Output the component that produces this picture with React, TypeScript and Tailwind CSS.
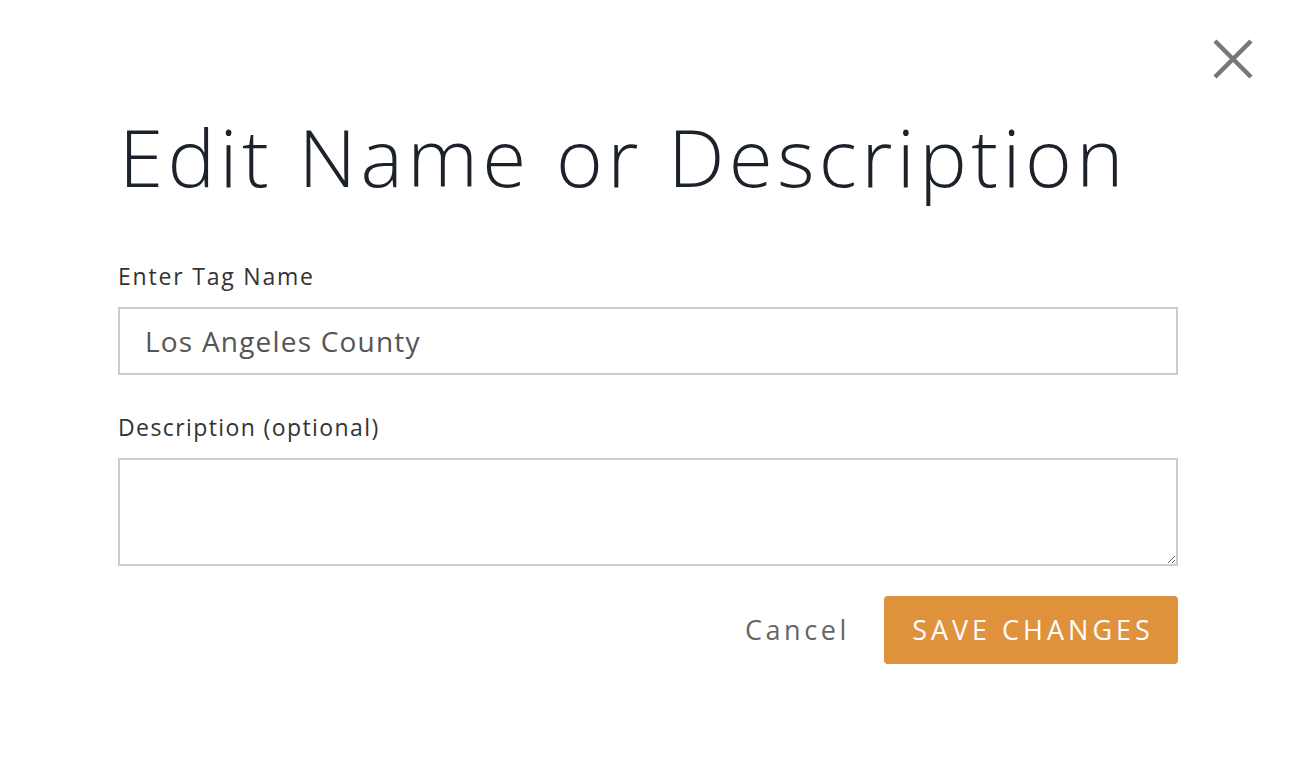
import React from "react";

export default function App() {
  return (
    <div className="w-[1290px] h-[774px] bg-white relative" style={{ fontFamily: '"Open Sans", "Noto Sans", sans-serif' }}>
      <button className="absolute left-[1211px] top-[38px] w-[44px] h-[42px] flex items-center justify-center">
        <svg width="44" height="42" viewBox="0 0 44 42">
          <path d="M4 3 L40 39 M40 3 L4 39" stroke="#777777" strokeWidth="4.5" strokeLinecap="butt" />
        </svg>
      </button>
      <div className="pl-[118px] pr-[112px] pt-[106px]">
        <h1 className="text-[80px] leading-[100px] font-light text-[#1c222a] tracking-[4.4px] ml-[1px] whitespace-nowrap">Edit Name or Description</h1>
        <div className="mt-[56px] text-[23px] leading-[28px] text-[#333333] tracking-[1.8px]">Enter Tag Name</div>
        <div className="mt-[17px] h-[68px] border-2 border-[#cccccc] flex items-center pl-[25px] text-[28px] text-[#555555] tracking-[1.2px]">
          Los Angeles County
        </div>
        <div className="mt-[38px] text-[23px] leading-[28px] text-[#333333] tracking-[1.4px]">Description (optional)</div>
        <textarea className="mt-[17px] block w-full h-[108px] border-2 border-[#cccccc] outline-none resize-y" />
        <div className="mt-[30px] flex items-center justify-end">
          <button className="text-[27px] text-[#666666] tracking-[3.6px] mr-[34px]">Cancel</button>
          <button className="h-[68px] w-[294px] bg-[#e0913c] rounded-[4px] text-white text-[27px] tracking-[4px] pl-[4px]">SAVE CHANGES</button>
        </div>
      </div>
    </div>
  );
}
